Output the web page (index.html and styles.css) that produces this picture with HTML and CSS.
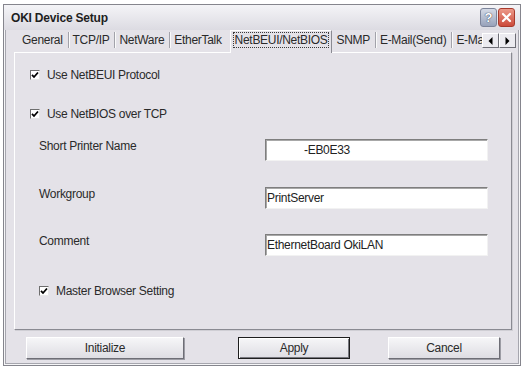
FILE: index.html
```html
<!DOCTYPE html>
<html lang="en">
<head>
    <meta charset="UTF-8">
    <title>OKI Device Setup</title>
    <link rel="stylesheet" href="styles.css">
</head>
<body>
    <div class="window">
        <div class="titlebar">
            <span class="title">OKI Device Setup</span>
            <div class="caption-btns">
                <span class="cap-btn help">?</span>
                <span class="cap-btn close">
                    <svg width="11" height="11" viewBox="0 0 11 11"><path d="M2 2 L9 9 M9 2 L2 9" stroke="#fff" stroke-width="2.2" stroke-linecap="round"/></svg>
                </span>
            </div>
        </div>

        <div class="tabrow">
            <div class="tabs">
                <span class="tab first">General</span>
                <span class="tab">TCP/IP</span>
                <span class="tab">NetWare</span>
                <span class="tab no-sep">EtherTalk</span>
                <span class="tab active"><span class="focus">NetBEUI/NetBIOS</span></span>
                <span class="tab">SNMP</span>
                <span class="tab">E-Mail(Send)</span>
                <span class="tab">E-Mail(Receive)</span>
            </div>
            <div class="tab-scroll">
                <span class="arrow"><svg width="5" height="8" viewBox="0 0 5 8"><polygon points="4.5,0 0.5,4 4.5,8" fill="#000"/></svg></span>
                <span class="arrow"><svg width="5" height="8" viewBox="0 0 5 8"><polygon points="0.5,0 4.5,4 0.5,8" fill="#000"/></svg></span>
            </div>
        </div>

        <div class="panel">
            <!-- 协议选项 -->
            <div class="check first-row">
                <span class="box"><svg width="8" height="8" viewBox="0 0 8 8"><path d="M1 3.8 L3 6 L7 1.5" fill="none" stroke="#000" stroke-width="1.8"/></svg></span>
                Use NetBEUI Protocol
            </div>
            <div class="check second-row">
                <span class="box"><svg width="8" height="8" viewBox="0 0 8 8"><path d="M1 3.8 L3 6 L7 1.5" fill="none" stroke="#000" stroke-width="1.8"/></svg></span>
                Use NetBIOS over TCP
            </div>

            <div class="field name-row">
                <label>Short Printer Name</label>
                <input type="text" class="masked" value="-EB0E33">
            </div>
            <div class="field group-row">
                <label>Workgroup</label>
                <input type="text" value="PrintServer">
            </div>
            <div class="field comment-row">
                <label>Comment</label>
                <input type="text" value="EthernetBoard OkiLAN">
            </div>

            <div class="check indent master-row">
                <span class="box"><svg width="8" height="8" viewBox="0 0 8 8"><path d="M1 3.8 L3 6 L7 1.5" fill="none" stroke="#000" stroke-width="1.8"/></svg></span>
                Master Browser Setting
            </div>
        </div>

        <div class="buttons">
            <span class="btn btn-init">Initialize</span>
            <span class="btn btn-apply">Apply</span>
            <span class="btn btn-cancel">Cancel</span>
        </div>
    </div>
</body>
</html>
```

FILE: styles.css
```css
body {
    margin: 0;
    background: #fff;
    font-family: "Liberation Sans", Arial, sans-serif;
    font-size: 12px;
    letter-spacing: -0.3px;
    color: #2a2a2a;
}

.window {
    margin: 4px 0 0 3px;
    width: 518px;
    height: 362px;
    box-sizing: border-box;
    border: 1px solid #85858d;
    padding: 0 3px;
    background: #e4e2e8;
    box-shadow: inset 0 0 0 1px #f6f6f8, inset 0 0 0 2px #a6a6ae;
}

/* 标题栏 */
.titlebar {
    height: 25px;
    margin: 0 -3px;
    padding: 0 5px 0 7px;
    display: flex;
    align-items: center;
    background: linear-gradient(#f4f4f7, #dcdbe2);
}

.title {
    font-weight: bold;
    letter-spacing: -0.2px;
    color: #1e1e1e;
    flex: 1;
}

.caption-btns {
    display: flex;
    gap: 1px;
}

.cap-btn {
    width: 17px;
    height: 19px;
    box-sizing: border-box;
    border-radius: 3px;
    display: flex;
    align-items: center;
    justify-content: center;
}

.help {
    border: 1px solid #7c849a;
    background: linear-gradient(#d4dae6, #97a2ba);
    color: #fff;
    font-weight: bold;
    font-size: 13px;
    letter-spacing: 0;
    text-shadow: 0 0 1px #3c4254, 0 0 1px #3c4254;
}

.close {
    border: 1px solid #a83a2c;
    background: linear-gradient(#ec9a8a, #cc4a3a);
}

/* 选项卡 */
.tabrow {
    height: 22px;
    margin: 0 1px 0 7px;
    display: flex;
}

.tabs {
    flex: 1;
    min-width: 0;
    height: 23px;
    display: flex;
    overflow: hidden;
    white-space: nowrap;
}

.tab {
    flex-shrink: 0;
    height: 16px;
    margin-top: 2px;
    padding: 1px 5px 0 4px;
    box-sizing: border-box;
    line-height: 14px;
    border-right: 1px solid #a2a2aa;
    box-shadow: 1px 0 0 #fafafa;
}

.tab.first {
    padding-left: 8px;
}

.tab.no-sep {
    border-right: none;
    box-shadow: none;
}

.tab.active {
    position: relative;
    z-index: 1;
    height: 23px;
    margin: 0 0 0 3px;
    padding: 2px 3px 0 3px;
    border: 1px solid;
    border-color: #fff #8a8a92 transparent #fff;
    border-bottom: none;
    background: #e4e2e8;
    box-shadow: none;
}

.focus {
    display: block;
    padding: 0 1px;
    outline: 1px dotted #3a3a3a;
}

.tab-scroll {
    display: flex;
    margin: 3px 0 0 0;
}

.arrow {
    width: 17px;
    height: 15px;
    box-sizing: border-box;
    border: 1px solid;
    border-color: #fff #6e6e76 #6e6e76 #fff;
    background: #ecebf0;
    display: flex;
    align-items: center;
    justify-content: center;
}

/* 内容面板 */
.panel {
    width: 498px;
    height: 278px;
    margin-left: 7px;
    box-sizing: border-box;
    padding-top: 15px;
    border: 1px solid;
    border-color: #fff #8a8a92 #8a8a92 #fff;
    box-shadow: 1px 1px 0 #cfced4;
}

.check {
    display: flex;
    align-items: center;
    height: 14px;
    padding-left: 15px;
}

.check.indent {
    padding-left: 24px;
}

.box {
    width: 10px;
    height: 10px;
    box-sizing: border-box;
    margin-right: 7px;
    border: 1px solid;
    border-color: #6e6e6e #e8e8e8 #e8e8e8 #6e6e6e;
    background: #fff;
    display: flex;
    align-items: center;
    justify-content: center;
}

.second-row {
    margin-top: 25px;
}

.field {
    display: flex;
    padding-left: 24px;
}

.field label {
    width: 226px;
    line-height: 14px;
}

.name-row {
    margin-top: 18px;
}

.group-row {
    margin-top: 26px;
}

.comment-row {
    margin-top: 25px;
}

.master-row {
    margin-top: 28px;
}

input[type="text"] {
    width: 223px;
    height: 22px;
    box-sizing: border-box;
    margin: 0;
    padding: 0 0 0 1px;
    border: 1px solid;
    border-color: #7e7e7e #f2f2f2 #f2f2f2 #7e7e7e;
    box-shadow: inset 1px 1px 0 #a8a8a8;
    background: #fff;
    font-family: "Liberation Sans", Arial, sans-serif;
    font-size: 12px;
    letter-spacing: -0.3px;
    color: #222;
    outline: none;
}

input.masked {
    padding-left: 38px;
}

/* 底部按钮 */
.buttons {
    display: flex;
    margin-top: 7px;
    padding-left: 19px;
}

.btn {
    width: 112px;
    height: 22px;
    box-sizing: border-box;
    border: 1px solid;
    border-color: #fff #6e6e76 #6e6e76 #fff;
    box-shadow: 1px 1px 0 #9c9ca4;
    background: linear-gradient(#f6f6f8, #dedde3);
    display: flex;
    align-items: center;
    justify-content: center;
}

.btn-init {
    width: 158px;
}

.btn-apply {
    margin-left: 54px;
    border-color: #1e1e1e;
    box-shadow: inset 1px 1px 0 #fff, inset -1px -1px 0 #77777e;
}

.btn-cancel {
    margin-left: 38px;
}
```
